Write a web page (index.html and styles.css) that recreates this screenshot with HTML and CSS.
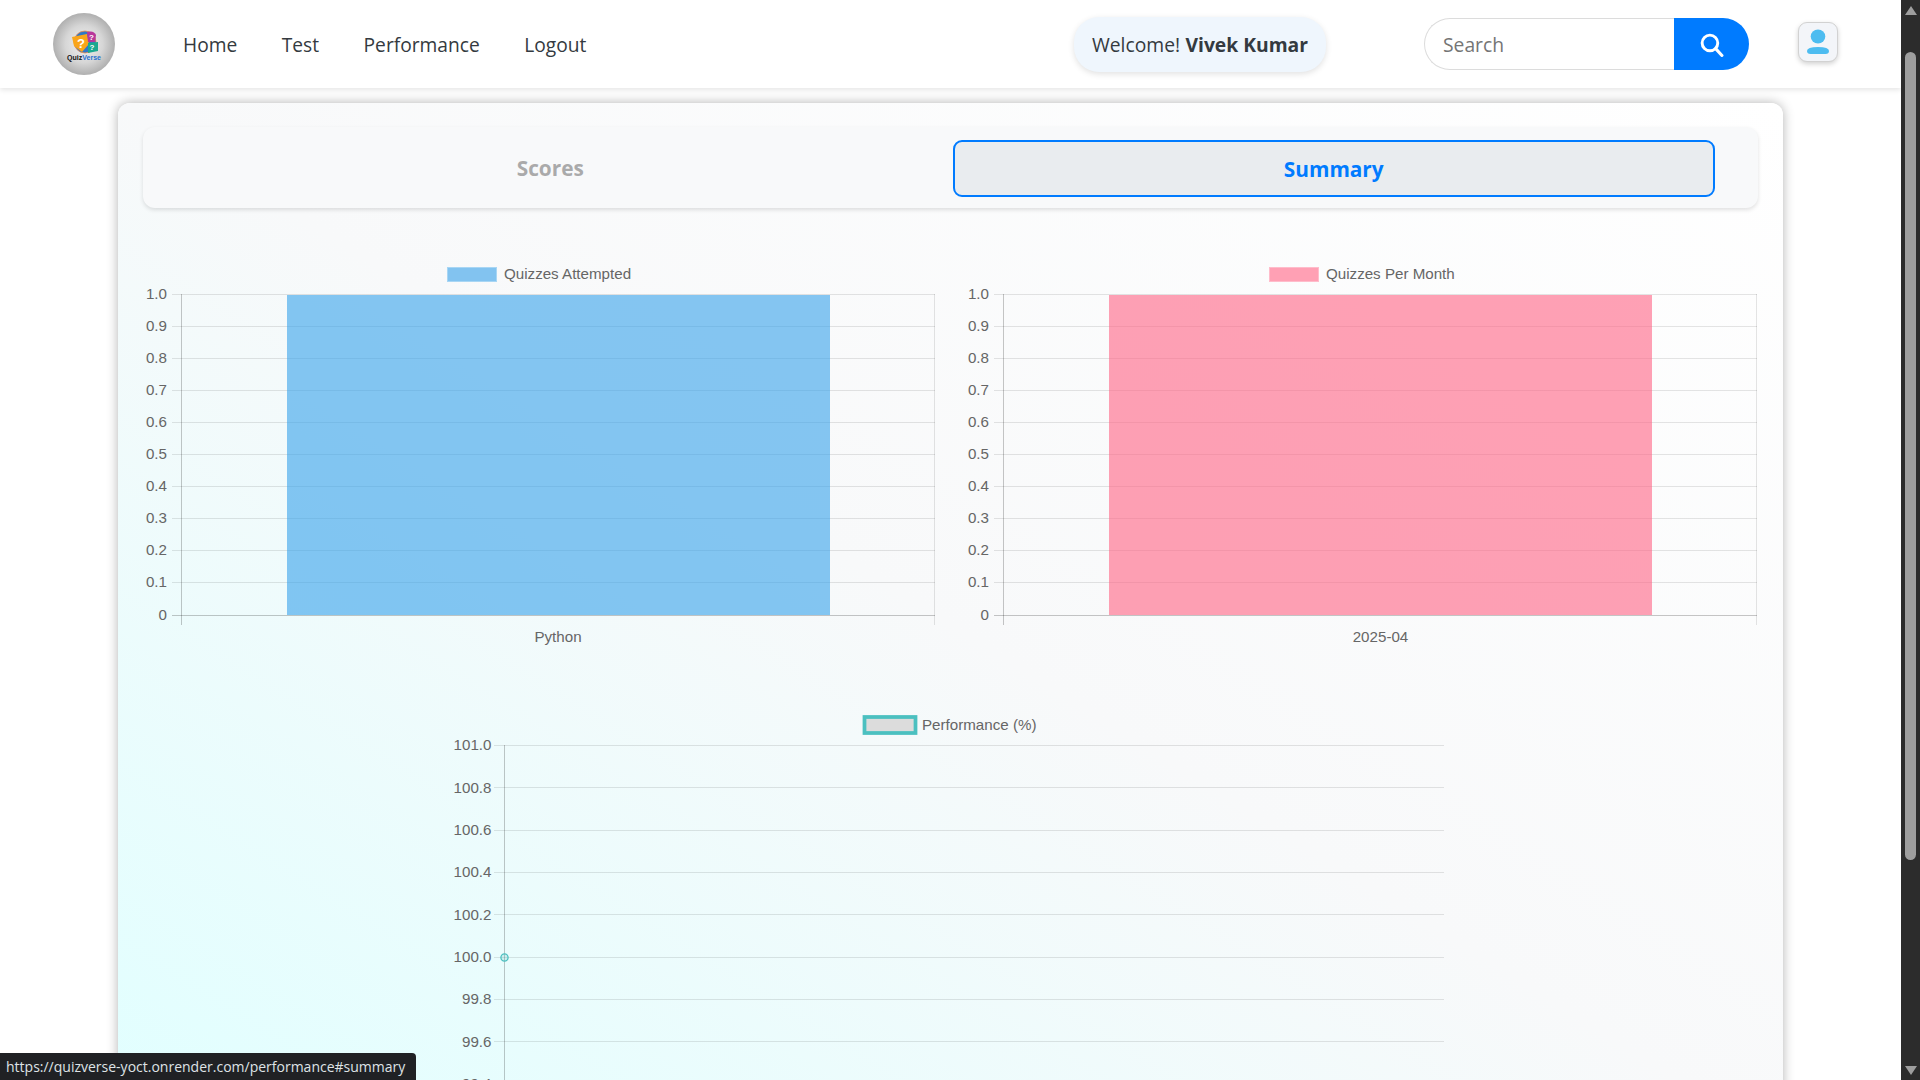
FILE: index.html
```html
<!DOCTYPE html>
<html lang="en">
<head>
<meta charset="utf-8">
<title>QuizVerse - Performance</title>
<link rel="stylesheet" href="styles.css">
</head>
<body>
<div class="window">
  <div class="page">
    <header class="navbar">
      <svg class="logo" viewBox="0 0 62 62" aria-label="QuizVerse">
        <defs>
          <radialGradient id="ball" cx="50%" cy="50%" r="55%">
            <stop offset="0" stop-color="#f2f2f2"/>
            <stop offset="0.55" stop-color="#d6d6d6"/>
            <stop offset="1" stop-color="#a6a6a6"/>
          </radialGradient>
        </defs>
        <circle cx="31" cy="31" r="31" fill="url(#ball)"/>
        <circle cx="32" cy="29" r="11" fill="#2f78c8" stroke="#f08a4b" stroke-width="0.8"/>
        <path d="M19 24 L34 21 L36 31 L29 39 L21 33 Z" fill="#f9a51a"/>
        <path d="M34 19 Q41 17 43 22 L42 29 L35 29 Z" fill="#b8379b"/>
        <path d="M35 30 L45 29 L45 38 L35 40 Z" fill="#1aa98f"/>
        <text class="logo-q" x="28" y="35">?</text>
        <text class="logo-q logo-q-s" x="38.5" y="27">?</text>
        <text class="logo-q logo-q-s" x="39" y="37">?</text>
        <text class="logo-word" x="31" y="46.5">Quiz<tspan fill="#1f6fd0">Verse</tspan></text>
      </svg>
      <nav class="nav-links">
        <a class="nav-link">Home</a>
        <a class="nav-link">Test</a>
        <a class="nav-link">Performance</a>
        <a class="nav-link">Logout</a>
      </nav>
      <div class="welcome">Welcome! <strong>Vivek Kumar</strong></div>
      <form class="search">
        <input class="search-input" type="text" placeholder="Search">
        <button class="search-btn" type="button" aria-label="Search">
          <svg viewBox="0 0 24 24" class="search-icon"><circle cx="10.5" cy="10.5" r="7.5" fill="none" stroke="#fff" stroke-width="2.8"/><path d="M16 16 L22 22.5" stroke="#fff" stroke-width="3" stroke-linecap="round"/></svg>
        </button>
      </form>
      <button class="avatar" type="button" aria-label="Profile">
        <svg viewBox="0 0 38 38" class="avatar-icon"><ellipse cx="19" cy="13.5" rx="7.3" ry="7" fill="#4dbcf0"/><path d="M8 28 Q8 24 19 24 Q30 24 30 28 Q30 31 26.5 31 H11.5 Q8 31 8 28 Z" fill="#4dbcf0"/></svg>
      </button>
    </header>

    <main class="card">
      <div class="tabs">
        <button class="tab" type="button">Scores</button>
        <button class="tab tab-active" type="button">Summary</button>
      </div>

      <div class="chart-row">
        <svg class="chart" viewBox="0 0 793 400" width="793" height="400">
          <rect x="304.5" y="17.5" width="49" height="14" fill="#82c3f0" stroke="#a8d6f4"/>
          <text class="lbl" x="361" y="29">Quizzes Attempted</text>
          <path class="grid" d="M29 44.5H792M29 76.5H792M29 108.5H792M29 140.5H792M29 172.5H792M29 204.5H792M29 236.5H792M29 268.5H792M29 300.5H792M29 332.5H792M791.5 44V375"/>
          <rect x="144" y="45" width="543" height="320" fill="#36a2eb" fill-opacity="0.6"/>
          <path class="axis" d="M38.5 44V375M29 365.5H792"/>
          <g class="lbl ticks">
            <text x="24" y="49">1.0</text><text x="24" y="81">0.9</text><text x="24" y="113">0.8</text><text x="24" y="145">0.7</text><text x="24" y="177">0.6</text><text x="24" y="209">0.5</text><text x="24" y="241">0.4</text><text x="24" y="273">0.3</text><text x="24" y="305">0.2</text><text x="24" y="337">0.1</text><text x="24" y="370">0</text>
          </g>
          <text class="lbl mid" x="415" y="392">Python</text>
        </svg>
        <svg class="chart" viewBox="0 0 793 400" width="793" height="400">
          <rect x="304.5" y="17.5" width="49" height="14" fill="#ffa0b4" stroke="#ffbccb"/>
          <text class="lbl" x="361" y="29">Quizzes Per Month</text>
          <path class="grid" d="M29 44.5H792M29 76.5H792M29 108.5H792M29 140.5H792M29 172.5H792M29 204.5H792M29 236.5H792M29 268.5H792M29 300.5H792M29 332.5H792M791.5 44V375"/>
          <rect x="144" y="45" width="543" height="320" fill="#ff6384" fill-opacity="0.6"/>
          <path class="axis" d="M38.5 44V375M29 365.5H792"/>
          <g class="lbl ticks">
            <text x="24" y="49">1.0</text><text x="24" y="81">0.9</text><text x="24" y="113">0.8</text><text x="24" y="145">0.7</text><text x="24" y="177">0.6</text><text x="24" y="209">0.5</text><text x="24" y="241">0.4</text><text x="24" y="273">0.3</text><text x="24" y="305">0.2</text><text x="24" y="337">0.1</text><text x="24" y="370">0</text>
          </g>
          <text class="lbl mid" x="415.5" y="392">2025-04</text>
        </svg>
      </div>

      <div class="chart-wide">
        <svg class="chart" viewBox="0 0 1001 420" width="1001" height="420">
          <rect x="414.5" y="17" width="51" height="16" fill="#dcdcdc" stroke="#4bc0c0" stroke-width="3.75"/>
          <text class="lbl" x="472" y="30">Performance (%)</text>
          <path class="grid" d="M44 45.5H994M44 87.5H994M44 130.5H994M44 172.5H994M44 214.5H994M44 257.5H994M44 299.5H994M44 341.5H994M44 384.5H994"/>
          <path class="axis" d="M54.5 45V420"/>
          <circle cx="54.5" cy="257.5" r="3.6" fill="#4bc0c0" fill-opacity="0.2" stroke="#4bc0c0" stroke-width="1.3"/>
          <g class="lbl ticks">
            <text x="41.5" y="50">101.0</text><text x="41.5" y="92.5">100.8</text><text x="41.5" y="135">100.6</text><text x="41.5" y="177">100.4</text><text x="41.5" y="219.5">100.2</text><text x="41.5" y="261.5">100.0</text><text x="41.5" y="304">99.8</text><text x="41.5" y="346.5">99.6</text><text x="41.5" y="389">99.4</text>
          </g>
        </svg>
      </div>
    </main>
  </div>

  <aside class="scrollbar" aria-hidden="true">
    <span class="arrow arrow-up"></span>
    <span class="track"><span class="thumb"></span></span>
    <span class="arrow arrow-down"></span>
  </aside>

  <div class="status">https://quizverse-yoct.onrender.com/performance#summary</div>
</div>
</body>
</html>
```
FILE: styles.css
```css
* { box-sizing: border-box; }
html, body { margin: 0; height: 100%; overflow: hidden; background: #fff; }
body { font-family: "Open Sans", "Noto Sans", "Liberation Sans", sans-serif; color: #343a40; }

.window { position: relative; display: flex; height: 1080px; width: 1920px; overflow: hidden; }
.page { flex: 1; min-width: 0; height: 1080px; overflow: hidden; background: #fff; }

.navbar {
  display: flex; align-items: center; height: 88px; padding: 0 63px 0 53px;
  background: #fff; box-shadow: 0 2px 5px rgba(0,0,0,.1); position: relative; z-index: 2;
}
.logo { width: 62px; height: 62px; flex: none; margin-right: 68px; }
.logo-q { font: 700 13px "Liberation Sans", sans-serif; fill: #fff; text-anchor: middle; }
.logo-q-s { font-size: 8px; }
.logo-word { font: 700 7px "Liberation Sans", sans-serif; fill: #111; text-anchor: middle; }

.nav-links { display: flex; gap: 44.5px; }
.nav-link { font-size: 19.2px; color: #343a40; }

.welcome {
  margin-left: auto; width: 252px; height: 55px; display: flex; align-items: center; justify-content: center; gap: .28em;
  background: #eff6fd; border-radius: 25px; font-size: 19.3px; color: #343a40;
  box-shadow: 0 2px 6px rgba(0,0,0,.12);
}
.welcome strong { font-weight: 700; }

.search { display: flex; margin-left: 98px; height: 52px; }
.search-input {
  width: 250px; height: 52px; padding: 0 18px; border: 1px solid #dcdcdc; border-right: 0;
  border-radius: 26px 0 0 26px; font: 19.3px "Open Sans", sans-serif; color: #333; outline: 0; background: #fff;
}
.search-input::placeholder { color: #757575; opacity: 1; }
.search-btn {
  width: 75px; height: 52px; border: 0; padding: 0; background: #007bff; border-radius: 0 26px 26px 0;
  display: flex; align-items: center; justify-content: center;
}
.search-icon { width: 25px; height: 25px; }

.avatar {
  margin-left: 49px; margin-top: -4px; width: 40px; height: 40px; padding: 0; background: #f3f5f9;
  border: 1px solid #d2d2d2; border-radius: 9px; box-shadow: 0 2px 5px rgba(0,0,0,.18);
  display: flex; align-items: center; justify-content: center;
}
.avatar-icon { width: 38px; height: 38px; }

.card {
  width: 1665px; margin: 15px 0 0 118px; padding: 24px 25px 25px; border-radius: 12px;
  background: linear-gradient(to top right, #e0ffff 0%, #f8f9fa 50%, #ffffff 100%);
  box-shadow: 0 0 12px rgba(0,0,0,.3);
}

.tabs {
  display: flex; gap: 21px; height: 81px; padding: 13px 43px 11px 26px;
  background: #f8f9fa; border-radius: 12px; box-shadow: 0 2px 4px rgba(0,0,0,.12);
}
.tab {
  flex: 1; border: 2px solid transparent; border-radius: 9px; background: transparent;
  font: 700 20.8px "Open Sans", sans-serif; color: #aaa; padding: 0 0 2px;
}
.tab-active { background: #e9ecef; border-color: #007bff; color: #007bff; padding: 0; }

.chart-row { display: grid; grid-template-columns: 793px 793px; column-gap: 29px; margin-top: 42px; }
.chart-wide { display: flex; justify-content: center; margin-top: 50px; }
.chart { display: block; overflow: visible; flex: none; }

.lbl { font-family: "Liberation Sans", Arial, sans-serif; font-size: 15.15px; fill: #666; }
.ticks text { text-anchor: end; }
.mid { text-anchor: middle; }
.grid { fill: none; stroke: rgba(0,0,0,.1); stroke-width: 1; }
.axis { fill: none; stroke: rgba(0,0,0,.22); stroke-width: 1; }

.scrollbar { width: 19px; flex: none; background: #2c2c2c; display: flex; flex-direction: column; align-items: center; height: 1080px; }
.track { flex: 1; width: 11px; position: relative; }
.thumb { display: block; margin-top: 37px; width: 11px; height: 808px; background: #9e9e9e; border-radius: 6px; }
.arrow { width: 0; height: 0; border-left: 6.5px solid transparent; border-right: 6.5px solid transparent; flex: none; }
.arrow-up { margin-top: 6px; border-bottom: 9px solid #9e9e9e; }
.arrow-down { margin-bottom: 5px; border-top: 9px solid #9e9e9e; }

.status {
  position: absolute; left: 0; bottom: 0; width: 416px; height: 27px; padding: 0 6px;
  background: #202124; color: #dfe3e6; font-size: 14px; line-height: 27px; white-space: nowrap;
  border-top-right-radius: 4px; z-index: 3;
}
```
